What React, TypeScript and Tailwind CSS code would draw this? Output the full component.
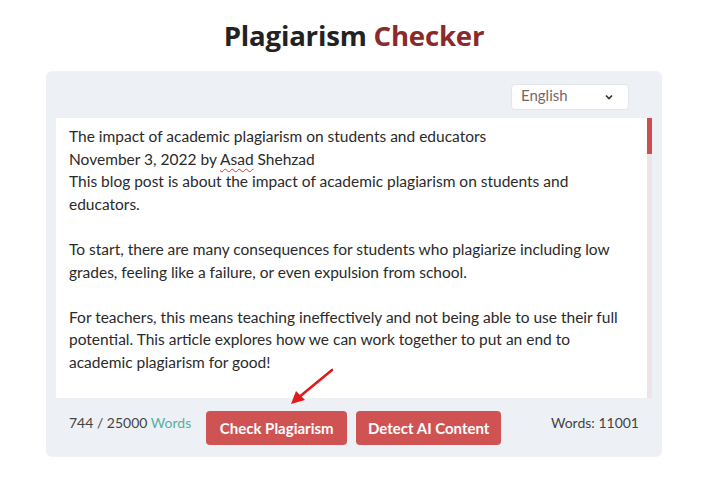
import React from 'react';

const App: React.FC = () => {
  return (
    <div className="w-[720px] h-[477px] bg-white font-['Lato','Open_Sans',sans-serif] text-[#333]">
      <h1 className="pt-[16px] pr-[12px] text-center text-[27.6px] font-bold leading-[38px] text-[#222] font-['Open_Sans',sans-serif] tracking-[-0.2px]">
        Plagiarism <span className="text-[#8a2b2b]">Checker</span>
      </h1>

      <div className="relative mx-[46px] mt-[17px] w-[616px] rounded-[6px] bg-[#edf1f5] px-[10px] pt-[13px] pb-[12px]">
        {/* language select */}
        <div className="flex justify-end pr-[23px]">
          <div className="flex h-[26px] w-[118px] items-center justify-between rounded-[4px] border border-[#e2e6ea] bg-white pl-[9px] pr-[14px] text-[15px] text-[#7a6464]">
            <span className="-mt-[4px]">English</span>
            <svg className="h-[10px] w-[10px]" viewBox="0 0 10 10" fill="none" stroke="#333" strokeWidth="1.6">
              <path d="M2 3.5l3 3 3-3" />
            </svg>
          </div>
        </div>

        {/* text area */}
        <div className="mt-[8px] flex h-[280px] bg-white">
          <div className="flex-1 pl-[13px] pr-[14px] pt-[7px] text-[15.5px] leading-[22.6px] text-[#2a2a2a]">
            <p>The impact of academic plagiarism on students and educators</p>
            <p>
              November 3, 2022 by{' '}
              <span className="underline decoration-wavy decoration-[#d33] decoration-[1px] underline-offset-[3px]">Asad</span>{' '}
              Shehzad
            </p>
            <p>This blog post is about the impact of academic plagiarism on students and educators.</p>
            <p className="h-[22.6px]" />
            <p>
              To start, there are many consequences for students who plagiarize including low grades,
              feeling like a failure, or even expulsion from school.
            </p>
            <p className="h-[22.6px]" />
            <p>
              For teachers, this means teaching ineffectively and not being able to use their full potential.
              This article explores how we can work together to put an end to academic plagiarism for good!
            </p>
          </div>
          <div className="w-[5px] bg-[#eee3e6]">
            <div className="h-[36px] w-full bg-[#cc4f4f]" />
          </div>
        </div>

        {/* footer */}
        <div className="mt-[13px] flex items-center pl-[13px] pr-[13px]">
          <span className="-mt-[12px] text-[14px] text-[#444]">
            744 / 25000 <span className="text-[#5aada3]">Words</span>
          </span>
          <button className="ml-[15px] h-[34px] w-[141px] rounded-[4px] bg-[#cf5353] text-[15px] font-bold text-white">
            Check Plagiarism
          </button>
          <button className="ml-[9px] h-[34px] w-[145px] rounded-[4px] bg-[#cf5353] text-[15px] font-bold text-white">
            Detect AI Content
          </button>
          <span className="-mt-[12px] ml-auto text-[14px] text-[#444]">Words: 11001</span>
        </div>

        {/* annotation arrow */}
        <svg className="absolute left-[240px] top-[296px] h-[40px] w-[50px]" viewBox="0 0 50 40">
          <path d="M46 3 L12 31" stroke="#e01b1b" strokeWidth="2.6" strokeLinecap="round" />
          <path d="M5 37 L10 24 L19 33 Z" fill="#e01b1b" />
        </svg>
      </div>
    </div>
  );
};

export default App;
